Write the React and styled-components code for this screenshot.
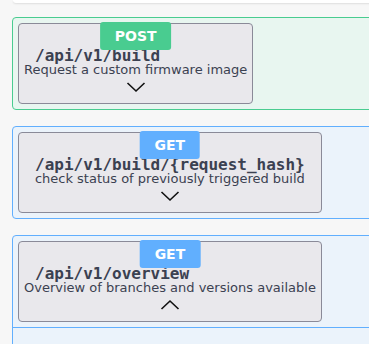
import styled, { createGlobalStyle } from "styled-components"

const GlobalStyle = createGlobalStyle`
  html, body {
    margin: 0;
    padding: 0;
    background: #f7f7f7;
    overflow: hidden;
  }
  body {
    font-family: "DejaVu Sans", sans-serif;
    color: #3b4151;
  }
`

const methods = {
  post: { color: '#49cc90', bg: '#e8f6f0' },
  get: { color: '#61affe', bg: '#ebf3fb' },
}

const Page = styled.div`
  padding-left: 12px;
  margin-right: -40px;
`

const TopCard = styled.div`
  height: 3px;
  margin-left: 1px;
  background: #fff;
  border-radius: 0 0 4px 4px;
  box-shadow: 0 1px 2px rgba(0, 0, 0, 0.1);
  margin-bottom: 14px;
`

const Section = styled.div`
  border: 1px solid ${props => methods[props.method].color};
  background: ${props => methods[props.method].bg};
  border-radius: 4px 0 0 4px;
  margin-bottom: 16px;
  min-height: ${props => props.open ? '120px' : 'auto'};
`

const Header = styled.div`
  padding: 5px;
  border-bottom: ${props => props.open ? `1px solid ${methods[props.method].color}` : '0'};
`

const Summary = styled.div`
  position: relative;
  display: inline-flex;
  flex-direction: column;
  align-items: center;
  padding: 25px 5px 6px;
  background: #e9e8ec;
  border: 1px solid #8a8a98;
  border-radius: 4px;
`

const Badge = styled.span`
  position: absolute;
  top: -2px;
  left: 50%;
  transform: translateX(-50%);
  height: 28px;
  line-height: 28px;
  padding: 0 15px;
  border-radius: 3px;
  background: ${props => methods[props.method].color};
  color: #fff;
  font-weight: bold;
  font-size: 14px;
`

const Path = styled.div`
  align-self: stretch;
  text-align: left;
  padding: 0 11px;
  font-family: "DejaVu Sans Mono", monospace;
  font-weight: bold;
  font-size: 16px;
  line-height: 14px;
`

const Description = styled.div`
  font-size: 13px;
  line-height: 14px;
  white-space: nowrap;
`

const Chevron = ({ up }) => (
  <svg width="20" height="20" viewBox="0 0 20 20" style={{ display: 'block' }}>
    <path
      d={up ? 'M1.5 14 L10 6 L18.5 14' : 'M1.5 6 L10 14 L18.5 6'}
      fill="none"
      stroke="#111"
      strokeWidth="1.6"
    />
  </svg>
)

const endpoints = [
  { method: 'post', path: '/api/v1/build', description: 'Request a custom firmware image' },
  { method: 'get', path: '/api/v1/build/{request_hash}', description: 'check status of previously triggered build' },
  { method: 'get', path: '/api/v1/overview', description: 'Overview of branches and versions available', open: true },
]

const App = () => (
  <>
    <GlobalStyle />
    <Page>
      <TopCard />
      {endpoints.map(ep => (
        <Section key={ep.path} method={ep.method} open={ep.open}>
          <Header method={ep.method} open={ep.open}>
            <Summary>
              <Badge method={ep.method}>{ep.method.toUpperCase()}</Badge>
              <Path>{ep.path}</Path>
              <Description>{ep.description}</Description>
              <Chevron up={ep.open} />
            </Summary>
          </Header>
        </Section>
      ))}
    </Page>
  </>
)

export default App
